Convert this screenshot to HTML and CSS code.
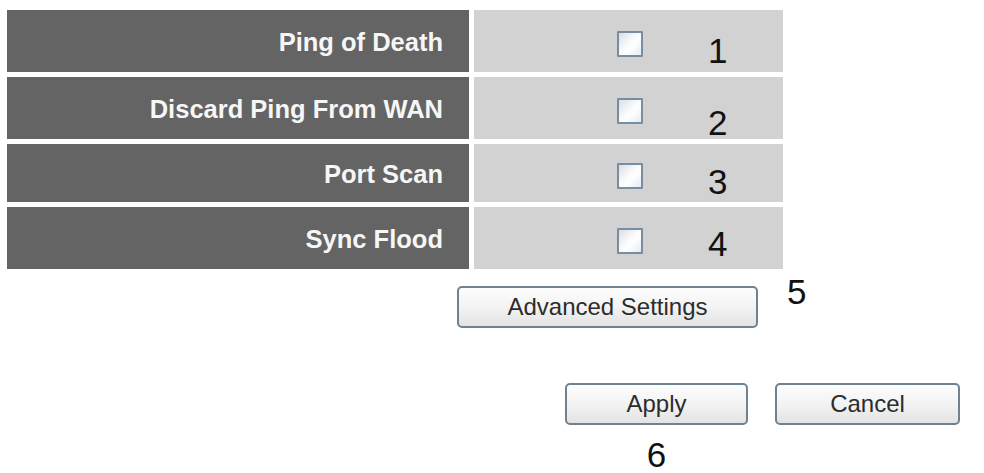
FILE: index.html
```html
<!DOCTYPE html>
<html>
<head>
<meta charset="utf-8">
<link rel="stylesheet" href="styles.css">
</head>
<body>
<div class="page">
  <div class="grid">
    <div class="label r-tall">Ping of Death</div>
    <div class="value r-tall"><span class="check"></span><span class="num n1">1</span></div>
    <div class="label">Discard Ping From WAN</div>
    <div class="value"><span class="check"></span><span class="num n2">2</span></div>
    <div class="label">Port Scan</div>
    <div class="value"><span class="check"></span><span class="num n3">3</span></div>
    <div class="label">Sync Flood</div>
    <div class="value"><span class="check"></span><span class="num n4">4</span></div>
  </div>
  <div class="adv-row">
    <button class="btn btn-adv">Advanced Settings</button>
    <span class="num n5">5</span>
  </div>
  <div class="actions">
    <div class="apply-col">
      <button class="btn btn-apply">Apply</button>
      <span class="num n6">6</span>
    </div>
    <button class="btn btn-cancel">Cancel</button>
  </div>
</div>
</body>
</html>
```
FILE: styles.css
```css
html, body {
  margin: 0;
  padding: 0;
  background: #ffffff;
}
.page {
  width: 984px;
  height: 473px;
  overflow: hidden;
  font-family: "Liberation Sans", Arial, sans-serif;
}
.grid {
  margin: 10px 0 0 7px;
  display: grid;
  grid-template-columns: 462px 309px;
  grid-template-rows: 62px 62px 58px 62px;
  column-gap: 5px;
  row-gap: 5px;
}
.label {
  background: #646464;
  color: #f6f6f6;
  font-weight: bold;
  font-size: 25.5px;
  display: flex;
  align-items: center;
  justify-content: flex-end;
  padding-right: 26px;
  padding-top: 2px;
  box-sizing: border-box;
}
.value {
  background: #d2d2d2;
  display: flex;
  align-items: flex-start;
  padding-left: 143px;
}
.check {
  width: 22px;
  height: 22px;
  border: 2px solid #788ea0;
  border-radius: 1px;
  background: linear-gradient(135deg, #d8dee6 0%, #fafafa 45%, #ffffff 60%, #e2ecf4 100%);
  align-self: center;
  margin-top: 6px;
  flex: none;
}
.num {
  font-family: "Liberation Sans", Arial, sans-serif;
  font-size: 35px;
  line-height: 35px;
  color: #111111;
}
.value .num {
  margin-left: 65px;
}
.n1 { margin-top: 23px; }
.n2 { margin-top: 28px; }
.n3 { margin-top: 20px; }
.n4 { margin-top: 19px; }
.adv-row {
  display: flex;
  align-items: flex-start;
  margin: 17px 0 0 457px;
  gap: 29px;
}
.n5 { margin-top: -12px; }
.btn {
  height: 42px;
  border: 2px solid #6e8292;
  border-radius: 5px;
  background: linear-gradient(#fdfdfd 0%, #f3f3f3 50%, #e3e3e3 100%);
  font-family: "Liberation Sans", Arial, sans-serif;
  font-size: 24px;
  color: #2c2c2c;
  padding: 0;
  box-sizing: border-box;
}
.btn-adv { width: 301px; }
.btn-apply { width: 183px; }
.btn-cancel { width: 185px; }
.actions {
  display: flex;
  align-items: flex-start;
  gap: 27px;
  margin: 55px 0 0 565px;
}
.apply-col {
  display: flex;
  flex-direction: column;
  align-items: center;
}
.n6 {
  line-height: 30px;
  margin-top: 15px;
}
```
